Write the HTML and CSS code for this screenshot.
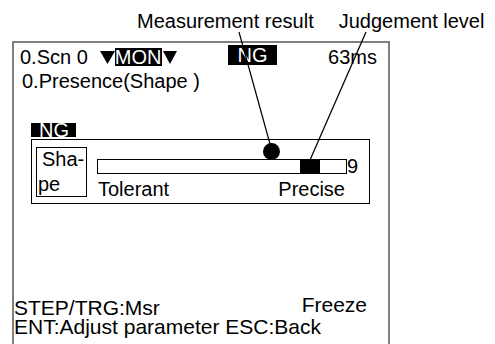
FILE: index.html
```html
<!DOCTYPE html>
<html>
<head>
    <title>Presence (Shape) - Judgement level</title>
    <link rel="stylesheet" href="styles.css">
</head>
<body>
    <div class="page">
        <div class="callouts">
            <span class="callout">Measurement result</span>
            <span class="callout callout-level">Judgement level</span>
        </div>
        <div class="screen">
            <div class="status-row">
                <div class="scene">
                    <span>0.Scn 0</span>
                    <svg class="tri tri-first" width="15" height="13" viewBox="0 0 15 13"><polygon points="0,0 15,0 7.5,13"/></svg>
                    <span class="inv mon">MON</span>
                    <svg class="tri" width="14" height="13" viewBox="0 0 14 13"><polygon points="0,0 14,0 7,13"/></svg>
                </div>
                <span class="inv judge">NG</span>
                <span class="time">63ms</span>
            </div>
            <div class="item-name">0.Presence(Shape )</div>
            <div class="item-judge"><span class="inv">NG</span></div>
            <div class="gauge">
                <div class="gauge-type">
                    <div class="type-top">Sha-</div>
                    <div class="type-bottom">pe</div>
                </div>
                <div class="gauge-scale">
                    <div class="result-dot" style="left: 166px"></div>
                    <div class="bar-row">
                        <div class="bar"><div class="level" style="left: 202px"></div></div>
                        <span class="bar-max">9</span>
                    </div>
                    <div class="bar-labels">
                        <span>Tolerant</span>
                        <span>Precise</span>
                    </div>
                </div>
            </div>
            <div class="footer">
                <div class="footer-row">
                    <span>STEP/TRG:Msr</span>
                    <span class="freeze">Freeze</span>
                </div>
                <div class="footer-row">ENT:Adjust parameter ESC:Back</div>
            </div>
        </div>
        <!-- leader lines from the callouts down to the gauge -->
        <svg class="leaders" width="495" height="344" viewBox="0 0 495 344">
            <line x1="239" y1="32" x2="270" y2="144"/>
            <line x1="366" y1="32" x2="310" y2="160"/>
        </svg>
    </div>
</body>
</html>
```

FILE: styles.css
```css
body {
    margin: 0;
    background-color: #fff;
    color: #000;
    font-family: "Liberation Sans", Arial, sans-serif;
    font-size: 20px;
}
.page {
    position: relative;
    width: 495px;
    height: 344px;
    overflow: hidden;
}
.callouts {
    display: flex;
    gap: 25px;
    padding: 9px 0 0 137px;
    height: 24px;
    line-height: 24px;
}
.screen {
    display: flex;
    flex-direction: column;
    margin: 8px 0 0 12px;
    width: 374px;
    height: 305px;
    border: 2px solid #808080;
    border-bottom: none;
}
.status-row {
    display: grid;
    grid-template-columns: 208px 49px 1fr;
    padding: 2px 11px 0 6px;
    line-height: 24px;
    height: 24px;
}
.scene {
    display: flex;
    align-items: center;
}
.tri {
    fill: #000;
    margin-left: 1px;
}
.tri-first {
    margin-left: 12px;
}
.inv {
    background-color: #000;
    color: #fff;
}
.mon {
    line-height: 18px;
}
.judge {
    align-self: start;
    height: 20px;
    line-height: 20px;
    text-align: center;
}
.time {
    text-align: right;
}
.item-name {
    padding-left: 8px;
    line-height: 24px;
}
.item-judge {
    display: flex;
    margin: 30px 0 0 17px;
}
.item-judge .inv {
    line-height: 14px;
    height: 14px;
    padding: 0 7px 0 8px;
}
.gauge {
    display: flex;
    box-sizing: border-box;
    margin: 2px 0 0 17px;
    width: 339px;
    height: 65px;
    border: 1px solid #000;
    padding: 7px 0 0 4px;
}
.gauge-type {
    box-sizing: border-box;
    width: 51px;
    height: 50px;
    border: 1px solid #000;
    line-height: 25px;
}
.type-top {
    padding-left: 5px;
    margin-top: -1px;
}
.type-bottom {
    padding-left: 1px;
}
.gauge-scale {
    position: relative;
    margin-left: 10px;
    padding-top: 12px;
}
.result-dot {
    position: absolute;
    top: -4px;
    width: 17px;
    height: 17px;
    border-radius: 50%;
    background-color: #000;
}
.bar-row {
    display: flex;
    align-items: flex-start;
}
.bar {
    position: relative;
    box-sizing: border-box;
    width: 250px;
    height: 15px;
    border: 1px solid #000;
}
.level {
    position: absolute;
    top: 0;
    bottom: 0;
    width: 20px;
    background-color: #000;
}
.bar-max {
    line-height: 15px;
}
.bar-labels {
    display: flex;
    justify-content: space-between;
    width: 250px;
    box-sizing: border-box;
    padding: 0 2px 0 1px;
    margin-top: 3px;
    line-height: 24px;
}
.footer {
    margin-top: auto;
    padding-bottom: 12px;
    font-size: 21px;
    line-height: 19px;
}
.footer-row {
    display: flex;
    justify-content: space-between;
    padding-right: 21px;
}
.freeze {
    margin-top: -3px;
}
.leaders {
    position: absolute;
    top: 0;
    left: 0;
    pointer-events: none;
}
.leaders line {
    stroke: #000;
    stroke-width: 1.2;
}
```
